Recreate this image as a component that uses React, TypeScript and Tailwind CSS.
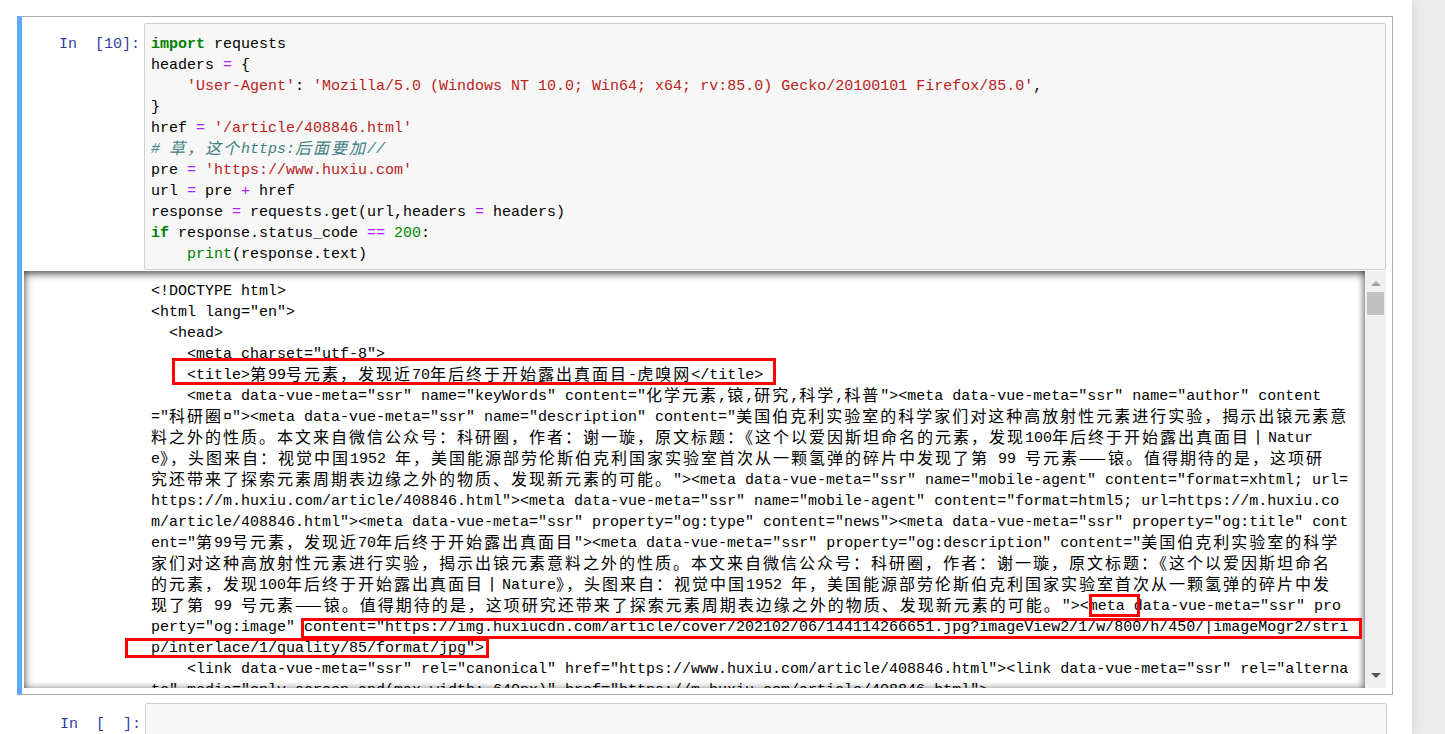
import React from "react";

const CJK = /([\u2014\u3000-\u303f\u3400-\u9fff\uff00-\uffef]+)/;

// CJK runs get their own font; letter-spacing makes each glyph two columns wide
function Mixed({ text }: { text: string }) {
  const parts = text.split(CJK);
  return (
    <>
      {parts.map((p, i) =>
        i % 2 === 1 ? (
          <span
            key={i}
            className="relative top-px font-['Noto_Sans_CJK_SC',sans-serif] text-[16px] leading-[15px] tracking-[2px]"
          >
            {p}
          </span>
        ) : (
          <React.Fragment key={i}>{p}</React.Fragment>
        )
      )}
    </>
  );
}

const K = ({ children }: { children: React.ReactNode }) => (
  <span className="font-bold text-[#008000]">{children}</span>
);
const O = ({ children }: { children: React.ReactNode }) => (
  <span className="text-[#aa22ff]">{children}</span>
);
const S = ({ children }: { children: React.ReactNode }) => (
  <span className="text-[#ba2121]">{children}</span>
);

const codeLines: React.ReactNode[] = [
  <>
    <K>import</K> requests
  </>,
  <>
    headers <O>=</O> {"{"}
  </>,
  <>
    {"    "}
    <S>'User-Agent'</S>: <S>'Mozilla/5.0 (Windows NT 10.0; Win64; x64; rv:85.0) Gecko/20100101 Firefox/85.0'</S>,
  </>,
  <>{"}"}</>,
  <>
    href <O>=</O> <S>'/article/408846.html'</S>
  </>,
  <span className="italic text-[#408080]">
    <Mixed text="# 草，这个https:后面要加//" />
  </span>,
  <>
    pre <O>=</O> <S>'https://www.huxiu.com'</S>
  </>,
  <>
    url <O>=</O> pre <O>+</O> href
  </>,
  <>
    response <O>=</O> requests.get(url,headers <O>=</O> headers)
  </>,
  <>
    <K>if</K> response.status_code <O>==</O> <span className="text-[#008800]">200</span>:
  </>,
  <>
    {"    "}
    <span className="text-[#008000]">print</span>(response.text)
  </>,
];

const outLines = [
  "<!DOCTYPE html>",
  '<html lang="en">',
  "  <head>",
  '    <meta charset="utf-8">',
  "    <title>第99号元素，发现近70年后终于开始露出真面目-虎嗅网</title>",
  '    <meta data-vue-meta="ssr" name="keyWords" content="化学元素,锿,研究,科学,科普"><meta data-vue-meta="ssr" name="author" content',
  '="科研圈¤"><meta data-vue-meta="ssr" name="description" content="美国伯克利实验室的科学家们对这种高放射性元素进行实验，揭示出锿元素意',
  "料之外的性质。本文来自微信公众号：科研圈，作者：谢一璇，原文标题：《这个以爱因斯坦命名的元素，发现100年后终于开始露出真面目丨Natur",
  "e》，头图来自：视觉中国1952 年，美国能源部劳伦斯伯克利国家实验室首次从一颗氢弹的碎片中发现了第 99 号元素——锿。值得期待的是，这项研",
  '究还带来了探索元素周期表边缘之外的物质、发现新元素的可能。"><meta data-vue-meta="ssr" name="mobile-agent" content="format=xhtml; url=',
  'https://m.huxiu.com/article/408846.html"><meta data-vue-meta="ssr" name="mobile-agent" content="format=html5; url=https://m.huxiu.co',
  'm/article/408846.html"><meta data-vue-meta="ssr" property="og:type" content="news"><meta data-vue-meta="ssr" property="og:title" cont',
  'ent="第99号元素，发现近70年后终于开始露出真面目"><meta data-vue-meta="ssr" property="og:description" content="美国伯克利实验室的科学',
  "家们对这种高放射性元素进行实验，揭示出锿元素意料之外的性质。本文来自微信公众号：科研圈，作者：谢一璇，原文标题：《这个以爱因斯坦命名",
  "的元素，发现100年后终于开始露出真面目丨Nature》，头图来自：视觉中国1952 年，美国能源部劳伦斯伯克利国家实验室首次从一颗氢弹的碎片中发",
  '现了第 99 号元素——锿。值得期待的是，这项研究还带来了探索元素周期表边缘之外的物质、发现新元素的可能。"><meta data-vue-meta="ssr" pro',
  'perty="og:image" content="https://img.huxiucdn.com/article/cover/202102/06/144114266651.jpg?imageView2/1/w/800/h/450/|imageMogr2/stri',
  'p/interlace/1/quality/85/format/jpg">',
  '    <link data-vue-meta="ssr" rel="canonical" href="https://www.huxiu.com/article/408846.html"><link data-vue-meta="ssr" rel="alterna',
  'te" media="only screen and(max-width: 640px)" href="https://m.huxiu.com/article/408846.html">',
];

export default function App() {
  return (
    <div className="flex h-[734px] overflow-hidden bg-[#eeeeee] font-['Liberation_Mono',monospace] text-[15px] text-black">
      <div className="w-[1412px] shrink-0 bg-white pl-[17px] pt-[16px] shadow-[0_0_12px_1px_rgba(87,87,87,0.2)]">
        {/* selected cell */}
        <div className="flex h-[679px] w-[1376px] flex-col border border-l-[5px] border-[#ababab] border-l-[#5ea9f5] pr-[6px] pt-[6px]">
          <div className="flex">
            <div className="w-[122px] shrink-0 pr-[4px] pt-[11px] text-right leading-[21px] text-[#303f9f] whitespace-pre">
              {"In\u00a0\u00a0[10]:"}
            </div>
            <div className="w-[1242px] rounded-[2px] border border-[#cfcfcf] bg-[#f7f7f7] pb-[4px] pl-[6px] pt-[10px]">
              {codeLines.map((l, i) => (
                <div key={i} className="h-[21px] leading-[21px] whitespace-pre">
                  {l}
                </div>
              ))}
            </div>
          </div>

          {/* scrolled output */}
          <div className="ml-[2px] mt-px flex h-[417px] w-[1362px]">
            <div className="relative flex-1 overflow-hidden pl-[127px] pt-[10px] shadow-[inset_0_2px_8px_rgba(0,0,0,0.8)]">
              {outLines.map((l, i) => (
                <div key={i} className="h-[21px] leading-[21px] whitespace-pre">
                  <Mixed text={l} />
                </div>
              ))}
              <div className="absolute left-[148px] top-[87px] h-[27px] w-[604px] border-[3px] border-[#ff0000]" />
              <div className="absolute left-[1065px] top-[323px] h-[23px] w-[51px] border-[3px] border-[#ff0000]" />
              <div className="absolute left-[277px] top-[347px] h-[21px] w-[1061px] border-[3px] border-[#ff0000]" />
              <div className="absolute left-[101px] top-[367px] h-[20px] w-[364px] border-[3px] border-[#ff0000]" />
            </div>
            <div className="flex w-[21px] shrink-0 flex-col items-center bg-[#f0f0f0] pt-[10px] pb-[10px]">
              <div className="h-0 w-0 border-x-[5px] border-b-[5px] border-x-transparent border-b-[#a3a3a3]" />
              <div className="mt-[6px] h-[23px] w-[17px] bg-[#c1c1c1]" />
              <div className="flex-1" />
              <div className="h-0 w-0 border-x-[5px] border-t-[5px] border-x-transparent border-t-[#505050]" />
            </div>
          </div>
        </div>

        {/* empty cell */}
        <div className="mt-px flex w-[1376px] border border-transparent pl-[5px] pt-[6px]">
          <div className="w-[122px] shrink-0 pr-[4px] pt-[11px] text-right leading-[21px] text-[#303f9f] whitespace-pre">
            {"In\u00a0\u00a0[\u00a0\u00a0]:"}
          </div>
          <div className="h-[60px] w-[1242px] rounded-[2px] border border-[#cfcfcf] bg-[#f7f7f7]" />
        </div>
      </div>
    </div>
  );
}
